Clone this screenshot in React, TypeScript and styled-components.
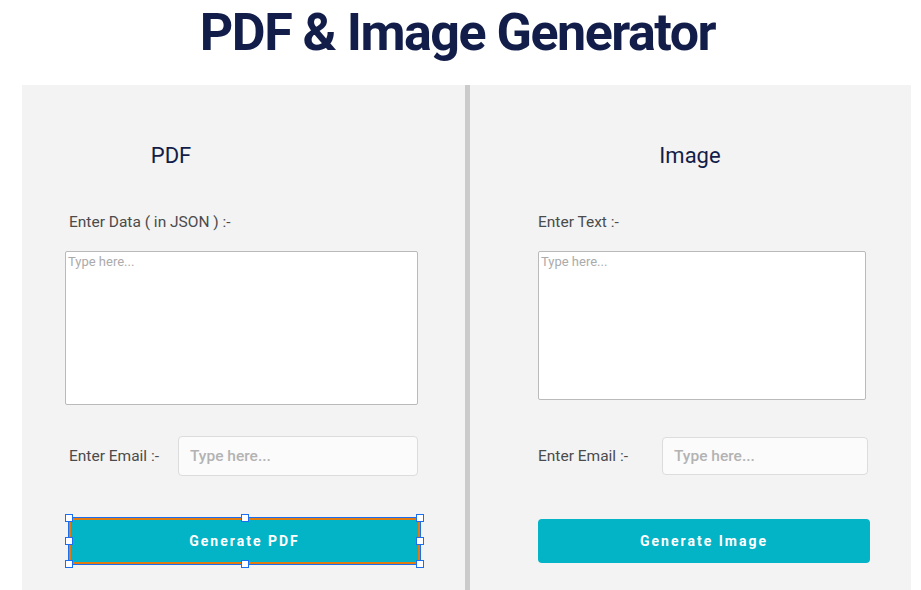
import styled, { createGlobalStyle } from 'styled-components'

const GlobalStyle = createGlobalStyle`
  html, body {
    margin: 0;
    padding: 0;
    background: #ffffff;
    font-family: Roboto, "Noto Sans", sans-serif;
  }
  * { box-sizing: border-box; }
`;

const Page = styled.div`
  width: 921px;
  height: 590px;
  overflow: hidden;
  display: flex;
  flex-direction: column;
`;

const Title = styled.h1`
  margin: 0;
  height: 85px;
  padding: 5px 6px 0 0;
  text-align: center;
  font-family: Roboto, sans-serif;
  font-weight: 700;
  font-size: 52px;
  line-height: 56px;
  letter-spacing: -1.5px;
  color: #121d49;
`;

const Columns = styled.div`
  display: grid;
  grid-template-columns: 443px 5px 441px;
  margin-left: 22px;
  flex: 1;
`;

const Divider = styled.div`
  background: #cbcbcb;
`;

const Panel = styled.section<{ left: number, right: number }>`
  background: #f3f3f3;
  display: flex;
  flex-direction: column;
  padding: 58px ${(p) => p.right}px 0 ${(p) => p.left}px;
`;

const Heading = styled.h2<{ shift?: number }>`
  margin: 0;
  height: 26px;
  font-size: 22px;
  line-height: 26px;
  font-weight: 400;
  color: #121d49;
  text-align: center;
  transform: translateX(${(p) => p.shift || 0}px);
`;

const Label = styled.label<{ indent?: number }>`
  display: block;
  font-size: 15.5px;
  line-height: 20px;
  color: #4b4b4b;
  padding-left: ${(p) => p.indent || 0}px;
  white-space: nowrap;
`;

const FieldLabel = styled(Label)`
  margin-top: 43px;
`;

const TextArea = styled.textarea<{ h: number, w: number }>`
  display: block;
  margin-top: 19px;
  width: ${(p) => p.w}px;
  height: ${(p) => p.h}px;
  resize: none;
  border: 1px solid #bababa;
  border-radius: 2px;
  background: #ffffff;
  padding: 2px 2px;
  font-family: Roboto, sans-serif;
  font-size: 13px;
  line-height: 16px;
  &::placeholder { color: #ababab; }
`;

const EmailRow = styled.div<{ top: number }>`
  display: flex;
  align-items: center;
  margin-top: ${(p) => p.top}px;
  height: 40px;
`;

const EmailLabel = styled(Label)<{ w: number }>`
  width: ${(p) => p.w}px;
  flex: none;
`;

const EmailInput = styled.input<{ w: number, h: number }>`
  width: ${(p) => p.w}px;
  height: ${(p) => p.h}px;
  border: 1px solid #dcdcdc;
  border-radius: 4px;
  background: #fbfbfb;
  padding: 0 11px;
  font-family: Roboto, sans-serif;
  font-weight: 500;
  font-size: 15.5px;
  &::placeholder { color: #b3b3b3; }
`;

const Button = styled.button<{ top: number, h: number }>`
  display: block;
  width: 100%;
  margin-top: ${(p) => p.top}px;
  height: ${(p) => p.h}px;
  border: none;
  border-radius: 4px;
  background: #03b3c6;
  color: #ffffff;
  font-family: Roboto, sans-serif;
  font-weight: 700;
  font-size: 14px;
  letter-spacing: 2px;
`;

// editor selection around the focused button
const Selected = styled.div`
  position: relative;
  margin-top: 41px;
  margin-left: 3px;
  margin-right: -2px;
  border: 1px solid #1a6ef2;
  & > button {
    margin-top: 0;
    border: 2px solid #e07b12;
    border-radius: 0;
  }
`;

const Handle = styled.span<{ x: string, y: string }>`
  position: absolute;
  left: ${(p) => p.x};
  top: ${(p) => p.y};
  width: 8px;
  height: 8px;
  margin: -4px 0 0 -4px;
  background: #ffffff;
  border: 1.5px solid #1a6ef2;
`;

const handles: [string, string][] = [
  ['0%', '0%'], ['50%', '0%'], ['100%', '0%'],
  ['0%', '50%'], ['100%', '50%'],
  ['0%', '100%'], ['50%', '100%'], ['100%', '100%'],
]

export default function App() {
  return (
    <Page>
      <GlobalStyle />
      <Title>PDF &amp; Image Generator</Title>
      <Columns>
        <Panel left={43} right={46}>
          <Heading shift={-71}>PDF</Heading>
          <FieldLabel indent={4}>Enter Data ( in JSON ) :-</FieldLabel>
          <TextArea w={353} h={154} placeholder="Type here..." />
          <EmailRow top={31}>
            <EmailLabel indent={4} w={113}>Enter Email :-</EmailLabel>
            <EmailInput w={240} h={40} placeholder="Type here..." />
          </EmailRow>
          <Selected>
            <Button top={0} h={46}>Generate PDF</Button>
            {handles.map(([x, y]) => <Handle key={x + y} x={x} y={y} />)}
          </Selected>
        </Panel>
        <Divider />
        <Panel left={68} right={41}>
          <Heading shift={-14}>Image</Heading>
          <FieldLabel>Enter Text :-</FieldLabel>
          <TextArea w={328} h={149} placeholder="Type here..." />
          <EmailRow top={36}>
            <EmailLabel w={124}>Enter Email :-</EmailLabel>
            <EmailInput w={206} h={38} placeholder="Type here..." />
          </EmailRow>
          <Button top={43} h={44}>Generate Image</Button>
        </Panel>
      </Columns>
    </Page>
  )
}
